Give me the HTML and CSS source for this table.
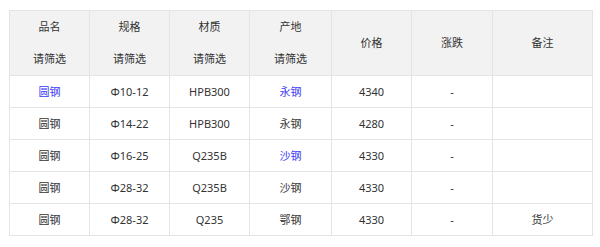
FILE: index.html
```html
<!DOCTYPE html>
<html lang="zh">
<head>
<meta charset="utf-8">
<link rel="stylesheet" href="styles.css">
</head>
<body>
<table class="grid">
  <colgroup>
    <col class="c80"><col class="c80"><col class="c80"><col class="c82"><col class="c80"><col class="c81"><col class="c100">
  </colgroup>
  <thead>
    <tr>
      <th><div class="h-line">品名</div><div class="h-line">请筛选</div></th>
      <th><div class="h-line">规格</div><div class="h-line">请筛选</div></th>
      <th><div class="h-line">材质</div><div class="h-line">请筛选</div></th>
      <th><div class="h-line">产地</div><div class="h-line">请筛选</div></th>
      <th>价格</th>
      <th>涨跌</th>
      <th>备注</th>
    </tr>
  </thead>
  <tbody>
    <tr><td class="link">圆钢</td><td>Φ10-12</td><td>HPB300</td><td class="link">永钢</td><td>4340</td><td>-</td><td></td></tr>
    <tr><td>圆钢</td><td>Φ14-22</td><td>HPB300</td><td>永钢</td><td>4280</td><td>-</td><td></td></tr>
    <tr><td>圆钢</td><td>Φ16-25</td><td>Q235B</td><td class="link">沙钢</td><td>4330</td><td>-</td><td></td></tr>
    <tr><td>圆钢</td><td>Φ28-32</td><td>Q235B</td><td>沙钢</td><td>4330</td><td>-</td><td></td></tr>
    <tr><td>圆钢</td><td>Φ28-32</td><td>Q235</td><td>鄂钢</td><td>4330</td><td>-</td><td>货少</td></tr>
  </tbody>
</table>
</body>
</html>
```
FILE: styles.css
```css
html, body {
  margin: 0;
  background: #ffffff;
}
body {
  padding: 10px 0 0 9px;
  font-family: "Noto Sans", "Noto Sans CJK SC", sans-serif;
  font-size: 11px;
  color: #333333;
}
.grid {
  border-collapse: collapse;
  table-layout: fixed;
  width: 584px;
}
.c80 { width: 80px; }
.c81 { width: 81px; }
.c82 { width: 82px; }
.c100 { width: 100px; }
.grid th,
.grid td {
  border: 1px solid #e4e4e4;
  padding: 0;
  text-align: center;
  vertical-align: middle;
  font-weight: normal;
  line-height: 16px;
}
.grid th {
  background: #f2f2f2;
  height: 64px;
}
.h-line {
  height: 32px;
  line-height: 32px;
}
.grid td {
  height: 31px;
}
.link {
  color: #3a3af5;
}
```
